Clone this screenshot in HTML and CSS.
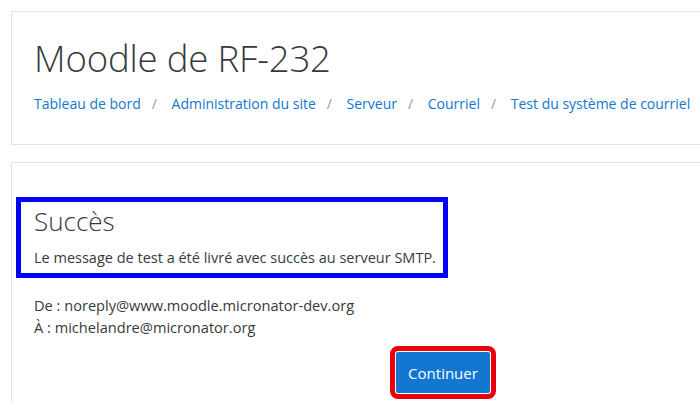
FILE: index.html
```html
<!DOCTYPE html>
<html lang="fr">
<head>
<meta charset="utf-8">
<link rel="stylesheet" href="styles.css">
</head>
<body>
<div class="page">
  <header class="card header-card">
    <h1 class="site-title">Moodle de RF-232</h1>
    <nav class="breadcrumb">
      <a href="#">Tableau de bord</a><span class="sep">/</span>
      <a href="#">Administration du site</a><span class="sep">/</span>
      <a href="#">Serveur</a><span class="sep">/</span>
      <a href="#">Courriel</a><span class="sep">/</span>
      <a href="#">Test du système de courriel</a>
    </nav>
  </header>
  <main class="card main-card">
    <div class="success-box">
      <h2 class="success-title">Succès</h2>
      <p class="success-msg">Le message de test a été livré avec succès au serveur SMTP.</p>
    </div>
    <div class="details">
      <div>De : noreply@www.moodle.micronator-dev.org</div>
      <div>À : michelandre@micronator.org</div>
    </div>
    <div class="actions">
      <span class="highlight"><button class="btn">Continuer</button></span>
    </div>
  </main>
</div>
</body>
</html>
```
FILE: styles.css
```css
html, body {
  margin: 0;
  padding: 0;
  background: #fff;
  overflow: hidden;
}
body {
  font-family: "Open Sans", "Noto Sans", sans-serif;
  color: #373a3c;
  font-size: 14px;
}
.page {
  padding: 11px 0 0 11px;
}
.card {
  border: 1px solid #e3e3e3;
  margin-right: -30px;
  background: #fff;
}
.header-card {
  height: 132px;
  padding: 0 22px;
  box-sizing: content-box;
}
.site-title {
  margin: 0;
  padding-top: 23px;
  font-weight: 300;
  font-size: 36.6px;
  line-height: 46px;
  color: #373a3c;
  letter-spacing: -0.2px;
}
.breadcrumb {
  margin-top: 13px;
  font-size: 14px;
  line-height: 20px;
}
.breadcrumb a {
  color: #1177d1;
  text-decoration: none;
}
.sep {
  color: #999;
  padding: 0 11px;
}
.main-card {
  margin-top: 17px;
  height: 300px;
  padding: 34px 22px 0 4px;
}
.success-box {
  display: inline-block;
  border: 5px solid #0000ff;
  padding: 2px 7px 4px 13px;
}
.success-title {
  margin: 0;
  font-weight: 300;
  font-size: 26px;
  line-height: 34px;
  color: #373a3c;
}
.success-msg {
  margin: 9px 0 0;
  font-size: 14.5px;
  line-height: 22px;
}
.details {
  margin-top: 16px;
  padding-left: 18px;
  font-size: 14.6px;
  line-height: 22px;
  color: #373a3c;
}
.actions {
  margin-top: 8px;
  padding-left: 374px;
}
.highlight {
  display: inline-block;
  border: 5px solid #e8000b;
  border-radius: 8px;
  padding: 1px;
}
.btn {
  display: block;
  width: 94px;
  height: 41px;
  border: 0;
  border-radius: 2px;
  background: #1177d1;
  color: #fff;
  font-family: "Open Sans", "Noto Sans", sans-serif;
  font-size: 15px;
}
```
